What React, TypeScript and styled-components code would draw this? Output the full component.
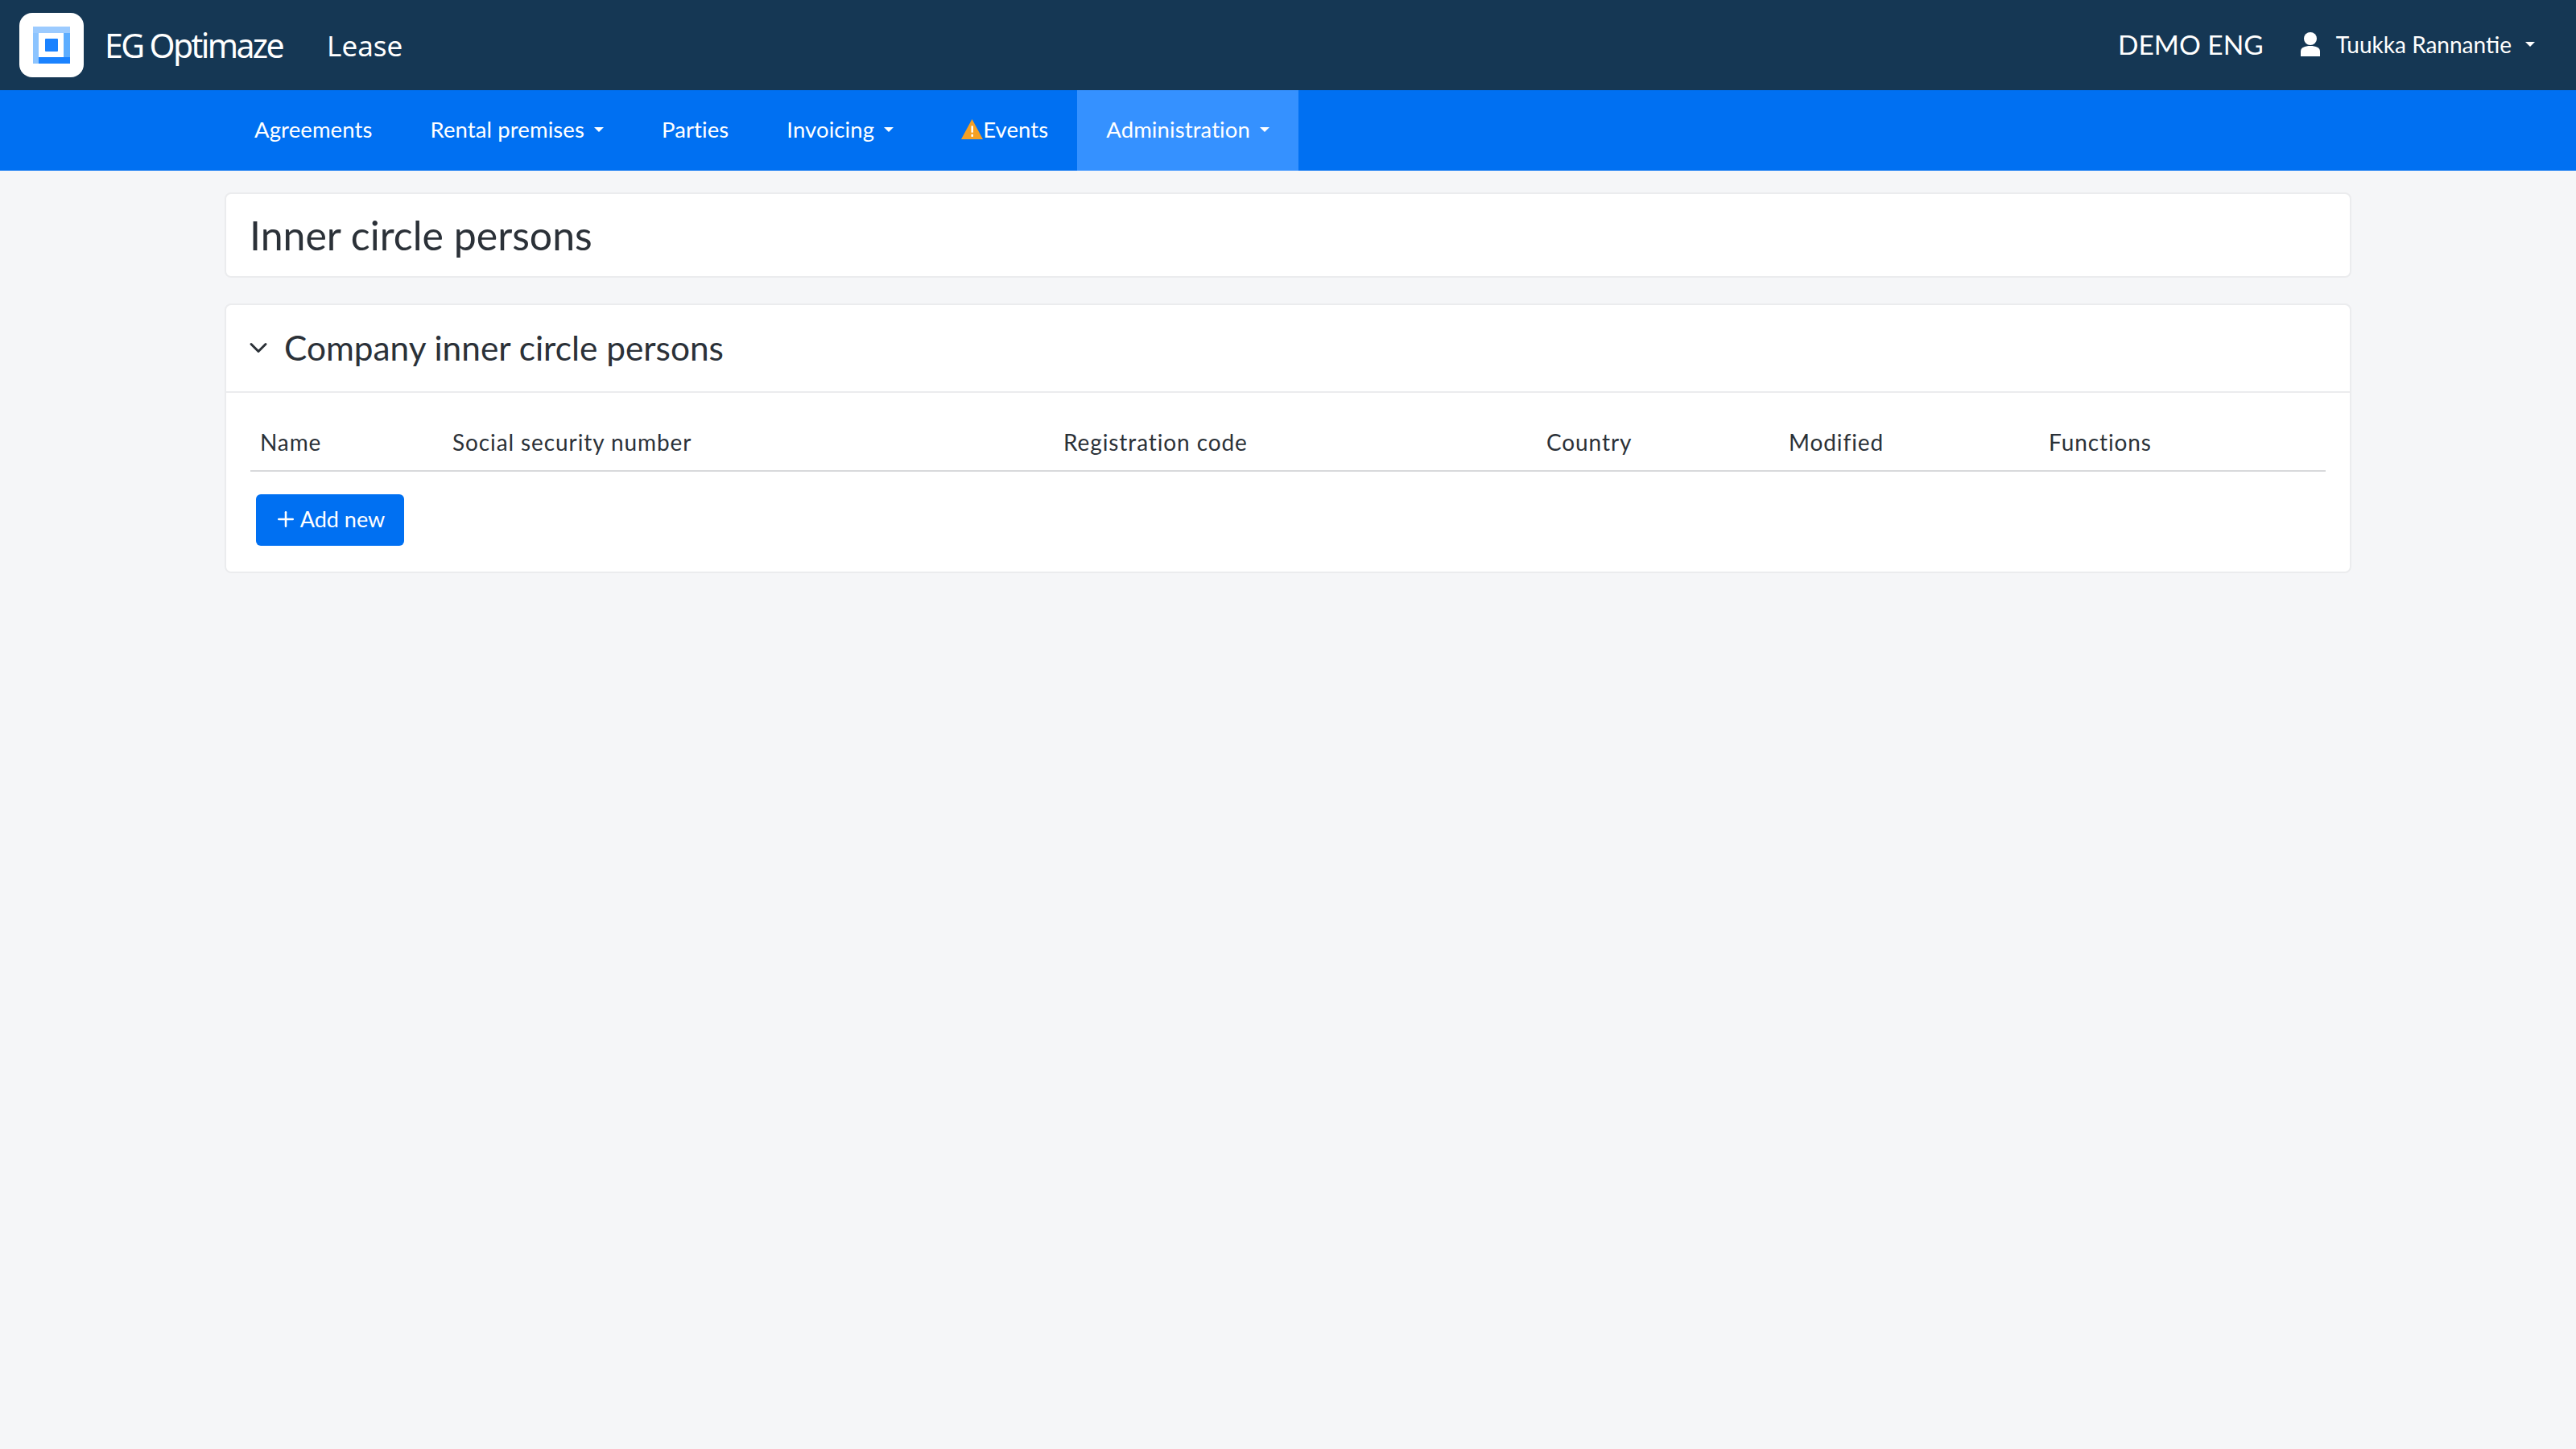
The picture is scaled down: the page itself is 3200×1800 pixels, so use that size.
import styled, { createGlobalStyle } from "styled-components";
import { ChevronDown, Plus } from "lucide-react";

const GlobalStyle = createGlobalStyle`
  * {
    box-sizing: border-box;
  }
  body {
    margin: 0;
    background: #f5f6f8;
    font-family: Lato, "Open Sans", sans-serif;
    color: #2b3138;
  }
`;

const Page = styled.div`
  min-height: 1800px;
  background: #f5f6f8;
`;

const TopBar = styled.header`
  height: 112px;
  background: #153754;
  color: #fff;
  display: flex;
  align-items: center;
  padding: 0 51px 0 24px;
`;

const LogoTile = styled.div`
  width: 80px;
  height: 80px;
  background: #fff;
  border-radius: 16px;
  display: flex;
  align-items: center;
  justify-content: center;
`;

const Brand = styled.span`
  margin-left: 26px;
  font-family: "Noto Sans", sans-serif;
  font-size: 41px;
  letter-spacing: -2.6px;
`;

const Product = styled.span`
  margin-left: 55px;
  font-family: "Noto Sans", sans-serif;
  font-size: 35px;
`;

const TopRight = styled.div`
  margin-left: auto;
  display: flex;
  align-items: center;
  padding-bottom: 2px;
`;

const Company = styled.span`
  font-size: 33.5px;
  margin-right: 46px;
`;

const UserName = styled.span`
  font-size: 28px;
  margin-left: 20px;
`;

const Caret = styled.span<{ $gap?: number }>`
  display: inline-block;
  margin-left: ${(p) => p.$gap ?? 12}px;
  border-top: 6px solid currentColor;
  border-left: 6px solid transparent;
  border-right: 6px solid transparent;
`;

const NavBar = styled.nav`
  height: 100px;
  background: #0070f2;
  display: flex;
  padding-left: 280px;
`;

const NavItem = styled.a<{ $active?: boolean }>`
  display: flex;
  align-items: center;
  padding: 0 36px 3px;
  color: #fff;
  font-size: 27.5px;
  letter-spacing: 0.1px;
  background: ${(p) => (p.$active ? "#3591ff" : "transparent")};
`;

const Content = styled.main`
  width: 2642px;
  margin: 27px auto 0;
  display: flex;
  flex-direction: column;
  gap: 32px;
`;

const Card = styled.section`
  background: #fff;
  border: 2px solid #ebecee;
  border-radius: 8px;
`;

const TitleCard = styled(Card)`
  height: 106px;
  display: flex;
  align-items: center;
  padding-left: 29px;
`;

const Title = styled.h1`
  margin: 0;
  font-size: 50px;
  font-weight: 400;
`;

const CardHeader = styled.div`
  height: 109px;
  display: flex;
  align-items: center;
  padding: 0 0 2px 22px;
  border-bottom: 2px solid #ebecee;
`;

const CardTitle = styled.h2`
  margin: 0 0 0 14px;
  font-size: 42.4px;
  font-weight: 400;
`;

const CardBody = styled.div`
  padding: 28px 30px 32px 30px;
`;

const Table = styled.table`
  width: 100%;
  border-collapse: collapse;
  table-layout: fixed;
`;

const HeadCell = styled.th<{ $width: number }>`
  width: ${(p) => p.$width}px;
  padding: 10px 12px 12px;
  text-align: left;
  font-size: 28px;
  font-weight: 400;
  line-height: 46px;
  letter-spacing: 0.9px;
  border-bottom: 2px solid #d8d9db;
`;

const AddButton = styled.button`
  margin: 28px 0 0 7px;
  width: 184px;
  height: 64px;
  display: flex;
  align-items: center;
  justify-content: center;
  gap: 3px;
  border: 0;
  border-radius: 6px;
  padding: 0 2px 3px 0;
  background: #0070f2;
  color: #fff;
  font-family: inherit;
  font-size: 27px;
`;

const EventsIcon = styled.svg`
  width: 27px;
  height: 25px;
  margin-left: 12px;
`;

const columns = [
  { label: "Name", width: 239 },
  { label: "Social security number", width: 759 },
  { label: "Registration code", width: 600 },
  { label: "Country", width: 301 },
  { label: "Modified", width: 323 },
  { label: "Functions", width: 356 },
];

export default function App() {
  return (
    <Page>
      <GlobalStyle />
      <TopBar>
        <LogoTile>
          <svg width="46" height="46" viewBox="0 0 46 46">
            <rect x="0" y="0" width="46" height="8" fill="#9ccbff" />
            <rect x="0" y="8" width="7" height="38" fill="#8cc4ff" />
            <rect x="38" y="8" width="8" height="31" fill="#5cadff" />
            <rect x="7" y="38" width="39" height="8" fill="#1a82ff" />
            <rect x="15" y="15" width="16" height="16" rx="1" fill="#1a82ff" />
          </svg>
        </LogoTile>
        <Brand>EG Optimaze</Brand>
        <Product>Lease</Product>
        <TopRight>
          <Company>DEMO ENG</Company>
          <svg width="24" height="30" viewBox="0 0 24 30" fill="#fff">
            <circle cx="12" cy="8" r="8" />
            <path d="M0 30v-6c0-5 5-7 12-7s12 2 12 7v6z" />
          </svg>
          <UserName>Tuukka Rannantie</UserName>
          <Caret $gap={17} />
        </TopRight>
      </TopBar>
      <NavBar>
        <NavItem>Agreements</NavItem>
        <NavItem>
          Rental premises
          <Caret />
        </NavItem>
        <NavItem>Parties</NavItem>
        <NavItem>
          Invoicing
          <Caret />
        </NavItem>
        <NavItem>
          <EventsIcon viewBox="0 0 26 24">
            <path d="M13 0 L26 24 H0 Z" fill="#f5a024" />
            <rect x="12" y="8" width="2.4" height="8" fill="#fff" />
            <rect x="12" y="18" width="2.4" height="3" fill="#fff" />
          </EventsIcon>
          Events
        </NavItem>
        <NavItem $active>
          Administration
          <Caret />
        </NavItem>
      </NavBar>
      <Content>
        <TitleCard>
          <Title>Inner circle persons</Title>
        </TitleCard>
        <Card>
          <CardHeader>
            <ChevronDown size={36} strokeWidth={2} />
            <CardTitle>Company inner circle persons</CardTitle>
          </CardHeader>
          <CardBody>
            <Table>
              <thead>
                <tr>
                  {columns.map((c) => (
                    <HeadCell key={c.label} $width={c.width}>
                      {c.label}
                    </HeadCell>
                  ))}
                </tr>
              </thead>
            </Table>
            <AddButton>
              <Plus size={30} strokeWidth={2} />
              Add new
            </AddButton>
          </CardBody>
        </Card>
      </Content>
    </Page>
  );
}
